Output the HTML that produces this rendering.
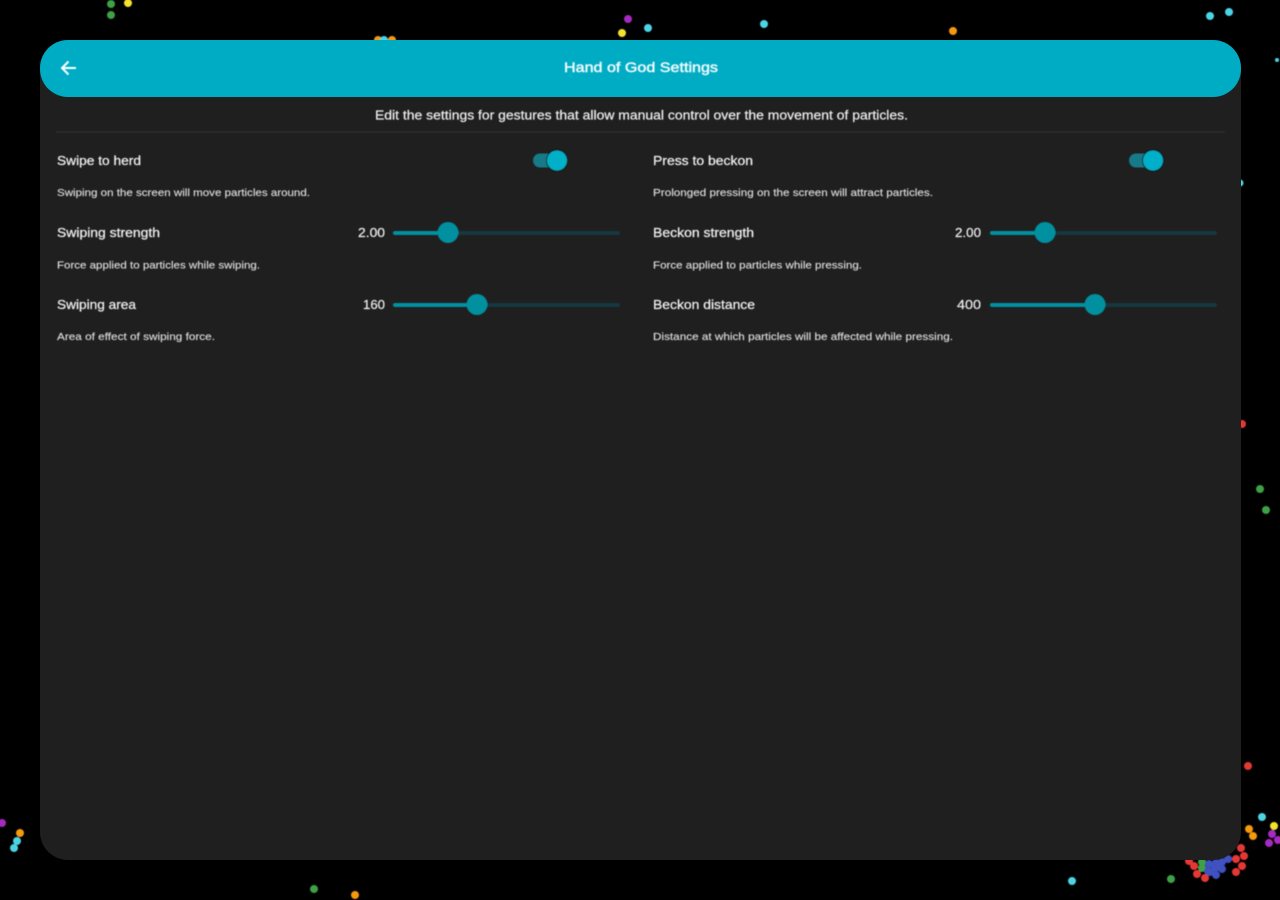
<!DOCTYPE html>
<html lang="en">
<head>
<meta charset="utf-8">
<title>Hand of God Settings</title>
<style>
html,body{margin:0;padding:0;width:1280px;height:900px;background:#000;overflow:hidden}
svg{display:block}
text{font-family:"Liberation Sans",sans-serif;}
.l{font-size:13px;fill:#f0f0f0;stroke:#f0f0f0;stroke-width:.25px}
.d{font-size:10.5px;fill:#dcdcdc;stroke:#dcdcdc;stroke-width:.15px}
.v{font-size:13px;fill:#f0f0f0;stroke:#f0f0f0;stroke-width:.2px}
</style>
</head>
<body>
<svg width="1280" height="900" viewBox="0 0 1280 900" xmlns="http://www.w3.org/2000/svg">
<defs>
<filter id="b" x="-5%" y="-5%" width="110%" height="110%"><feGaussianBlur stdDeviation="0.45"/></filter>
<filter id="p" x="-5%" y="-5%" width="110%" height="110%"><feGaussianBlur stdDeviation="0.6"/></filter>
</defs>
<rect width="1280" height="900" fill="#000"/>
<g filter="url(#p)" stroke-width="1">
<g fill="#3fa046" stroke="#3fa046">
<circle cx="111" cy="4" r="3.5"/><circle cx="111" cy="15" r="3.5"/>
<circle cx="1260" cy="489" r="3.5"/><circle cx="1266" cy="510" r="3.5"/>
<circle cx="1171" cy="879" r="3.5"/><circle cx="314" cy="889" r="3.5"/>
<circle cx="1202" cy="868" r="3.5"/><circle cx="1202" cy="862" r="3.5"/>
</g>
<g fill="#f5e22e" stroke="#f5e22e">
<circle cx="128" cy="3" r="3.5"/><circle cx="622" cy="33" r="3.5"/><circle cx="1274" cy="826" r="3.5"/>
</g>
<g fill="#f59a0c" stroke="#f59a0c">
<circle cx="378" cy="40" r="3.5"/><circle cx="392" cy="40" r="3.5"/><circle cx="953" cy="31" r="3.5"/>
<circle cx="1249" cy="829" r="3.5"/><circle cx="1253" cy="836" r="3.5"/>
<circle cx="20" cy="833" r="3.5"/><circle cx="355" cy="895" r="3.5"/>
</g>
<g fill="#4dd4e4" stroke="#4dd4e4">
<circle cx="384" cy="40" r="3.5"/><circle cx="648" cy="28" r="3.5"/><circle cx="764" cy="24" r="3.5"/>
<circle cx="1210" cy="16" r="3.5"/><circle cx="1229" cy="12" r="3.5"/><circle cx="1277" cy="60" r="1.5"/>
<circle cx="1262" cy="817" r="3.5"/><circle cx="17" cy="841" r="3.5"/><circle cx="14" cy="848" r="3.5"/>
<circle cx="1072" cy="881" r="3.5"/><circle cx="1240" cy="183" r="3"/>
</g>
<g fill="#a52cc0" stroke="#a52cc0">
<circle cx="628" cy="19" r="3.5"/><circle cx="1272" cy="834" r="3.5"/><circle cx="1278" cy="840" r="3.5"/>
<circle cx="1269" cy="843" r="3.5"/><circle cx="2" cy="823" r="3.5"/>
</g>
<g fill="#e53935" stroke="#e53935">
<circle cx="1242" cy="424" r="3.5"/><circle cx="1248" cy="766" r="3.5"/>
<circle cx="1241" cy="848" r="3.5"/><circle cx="1244" cy="856" r="3.5"/><circle cx="1236" cy="859" r="3.5"/>
<circle cx="1242" cy="866" r="3.5"/><circle cx="1236" cy="872" r="3.5"/><circle cx="1205" cy="878" r="3.5"/>
<circle cx="1197" cy="874" r="3.5"/><circle cx="1194" cy="866" r="3.5"/><circle cx="1189" cy="861" r="3.5"/>
</g>
<g fill="#3f51c0" stroke="#3f51c0">
<circle cx="1228" cy="859" r="3.5"/><circle cx="1222" cy="862" r="3.5"/><circle cx="1216" cy="863" r="3.5"/>
<circle cx="1209" cy="864" r="3.5"/><circle cx="1222" cy="869" r="3.5"/><circle cx="1215" cy="868" r="3.5"/>
<circle cx="1208" cy="871" r="3.5"/><circle cx="1216" cy="875" r="3.5"/><circle cx="1210" cy="872" r="3.5"/>
<circle cx="1219" cy="867" r="3.5"/>
</g>
</g>
<rect x="40" y="40" width="1201" height="820" rx="28" fill="#1f1f1f"/>
<rect x="40" y="40" width="1201" height="57" rx="28" fill="#00acc4"/>
<g filter="url(#b)">
<path d="M76 68H62.500M68.500 61.500L62 68L68.500 74.500" fill="none" stroke="#fff" stroke-width="2"/>
<text x="564" y="72" font-size="14" fill="#f2fbfc" stroke="#f2fbfc" stroke-width=".45" textLength="154" lengthAdjust="spacingAndGlyphs">Hand of God Settings</text>
<text x="375" y="119.500" font-size="13" fill="#f2f2f2" stroke="#f2f2f2" stroke-width=".2" textLength="533" lengthAdjust="spacingAndGlyphs">Edit the settings for gestures that allow manual control over the movement of particles.</text>
<rect x="56" y="131.500" width="1169" height="1" fill="#343434"/>

<text class="l" x="57" y="165" textLength="84" lengthAdjust="spacingAndGlyphs">Swipe to herd</text>
<text class="d" x="57" y="196" textLength="253" lengthAdjust="spacingAndGlyphs">Swiping on the screen will move particles around.</text>
<text class="l" x="57" y="237" textLength="103" lengthAdjust="spacingAndGlyphs">Swiping strength</text>
<text class="d" x="57" y="268.500" textLength="203" lengthAdjust="spacingAndGlyphs">Force applied to particles while swiping.</text>
<text class="l" x="57" y="309" textLength="79" lengthAdjust="spacingAndGlyphs">Swiping area</text>
<text class="d" x="57" y="340" textLength="158" lengthAdjust="spacingAndGlyphs">Area of effect of swiping force.</text>

<text class="l" x="653" y="165" textLength="100" lengthAdjust="spacingAndGlyphs">Press to beckon</text>
<text class="d" x="653" y="196" textLength="280" lengthAdjust="spacingAndGlyphs">Prolonged pressing on the screen will attract particles.</text>
<text class="l" x="653" y="237" textLength="101" lengthAdjust="spacingAndGlyphs">Beckon strength</text>
<text class="d" x="653" y="268.500" textLength="209" lengthAdjust="spacingAndGlyphs">Force applied to particles while pressing.</text>
<text class="l" x="653" y="309" textLength="102" lengthAdjust="spacingAndGlyphs">Beckon distance</text>
<text class="d" x="653" y="340" textLength="300" lengthAdjust="spacingAndGlyphs">Distance at which particles will be affected while pressing.</text>

<text class="v" x="358" y="237" textLength="27" lengthAdjust="spacingAndGlyphs">2.00</text>
<text class="v" x="363" y="309" textLength="22" lengthAdjust="spacingAndGlyphs">160</text>
<text class="v" x="955" y="237" textLength="26" lengthAdjust="spacingAndGlyphs">2.00</text>
<text class="v" x="957" y="309" textLength="24" lengthAdjust="spacingAndGlyphs">400</text>

<!-- switches -->
<rect x="533" y="153.500" width="26" height="14" rx="7" fill="#147a88"/>
<circle cx="557" cy="160.500" r="11" fill="#191919"/>
<circle cx="557" cy="160.500" r="10" fill="#00b0c8"/>
<rect x="1129" y="153.500" width="26" height="14" rx="7" fill="#147a88"/>
<circle cx="1153" cy="160.500" r="11" fill="#191919"/>
<circle cx="1153" cy="160.500" r="10" fill="#00b0c8"/>

<!-- sliders -->
<g>
<rect x="393" y="231" width="227" height="4" rx="2" fill="#14393f"/>
<rect x="393" y="231" width="55" height="4" rx="2" fill="#00909f"/>
<circle cx="448" cy="232.500" r="10.500" fill="#00909f"/>
<rect x="393" y="303" width="227" height="4" rx="2" fill="#14393f"/>
<rect x="393" y="303" width="84" height="4" rx="2" fill="#00909f"/>
<circle cx="477" cy="304.500" r="10.500" fill="#00909f"/>
<rect x="990" y="231" width="227" height="4" rx="2" fill="#14393f"/>
<rect x="990" y="231" width="55" height="4" rx="2" fill="#00909f"/>
<circle cx="1045" cy="232.500" r="10.500" fill="#00909f"/>
<rect x="990" y="303" width="227" height="4" rx="2" fill="#14393f"/>
<rect x="990" y="303" width="105" height="4" rx="2" fill="#00909f"/>
<circle cx="1095" cy="304.500" r="10.500" fill="#00909f"/>
</g>
</g>
</svg>
</body>
</html>
